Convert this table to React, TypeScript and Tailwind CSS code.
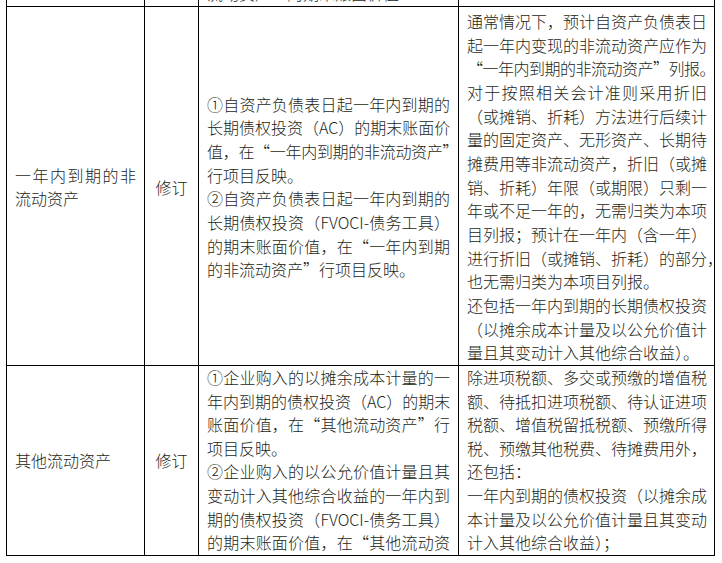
import React from 'react';

type Line = { t: string; j?: boolean; k?: string };

function Lines({ lines }: { lines: Line[] }) {
  return (
    <div>
      {lines.map((l, i) => (
        <span
          key={i}
          className={
            (l.j
              ? 'block whitespace-nowrap text-justify [text-align-last:justify]'
              : 'block whitespace-nowrap') + (l.k ? ' ' + l.k : '')
          }
        >
          {l.t}
        </span>
      ))}
    </div>
  );
}

const cell = 'border-l border-t border-black px-2 flex flex-col justify-center';

const r2c3: Line[] = [
  { t: '①自资产负债表日起一年内到期的', j: true },
  { t: '长期债权投资（AC）的期末账面价', j: true },
  { t: '值，在“一年内到期的非流动资产”', j: true, k: 'tracking-[-0.3px]' },
  { t: '行项目反映。' },
  { t: '②自资产负债表日起一年内到期的', j: true },
  { t: '长期债权投资（FVOCI-债务工具）', j: true },
  { t: '的期末账面价值，在“一年内到期', j: true },
  { t: '的非流动资产”行项目反映。' },
];

const r2c4: Line[] = [
  { t: '通常情况下，预计自资产负债表日', j: true },
  { t: '起一年内变现的非流动资产应作为', j: true },
  { t: '“一年内到期的非流动资产”列报。', j: true, k: 'tracking-[-0.5px]' },
  { t: '对于按照相关会计准则采用折旧', j: true },
  { t: '（或摊销、折耗）方法进行后续计', j: true },
  { t: '量的固定资产、无形资产、长期待', j: true },
  { t: '摊费用等非流动资产，折旧（或摊', j: true },
  { t: '销、折耗）年限（或期限）只剩一', j: true },
  { t: '年或不足一年的，无需归类为本项', j: true },
  { t: '目列报；预计在一年内（含一年）', j: true },
  { t: '进行折旧（或摊销、折耗）的部分，', j: true },
  { t: '也无需归类为本项目列报。' },
  { t: '还包括一年内到期的长期债权投资', j: true },
  { t: '（以摊余成本计量及以公允价值计', j: true },
  { t: '量且其变动计入其他综合收益）。' },
];

const r3c3: Line[] = [
  { t: '①企业购入的以摊余成本计量的一', j: true },
  { t: '年内到期的债权投资（AC）的期末', j: true },
  { t: '账面价值，在“其他流动资产”行', j: true },
  { t: '项目反映。' },
  { t: '②企业购入的以公允价值计量且其', j: true },
  { t: '变动计入其他综合收益的一年内到', j: true },
  { t: '期的债权投资（FVOCI-债务工具）', j: true },
  { t: '的期末账面价值，在“其他流动资', j: true },
];

const r3c4: Line[] = [
  { t: '除进项税额、多交或预缴的增值税', j: true },
  { t: '额、待抵扣进项税额、待认证进项', j: true },
  { t: '税额、增值税留抵税额、预缴所得', j: true },
  { t: '税、预缴其他税费、待摊费用外，', j: true },
  { t: '还包括：' },
  { t: '一年内到期的债权投资（以摊余成', j: true },
  { t: '本计量及以公允价值计量且其变动', j: true },
  { t: '计入其他综合收益）；' },
];

export default function App() {
  return (
    <div className="h-[563px] w-[722px] overflow-hidden bg-white font-['Noto_Sans_CJK_SC',sans-serif] text-[16px] font-light leading-[23.65px] text-[#231f20]">
      <div className="ml-[6px] -mt-[18.65px] grid w-[709px] grid-cols-[138px_54px_260px_256px] border-r border-b border-black">
        {/* previous row, cut off at the top */}
        <div className={cell} />
        <div className={cell} />
        <div className={cell}>
          <Lines lines={[{ t: '流动资产”的期末账面价值' }]} />
        </div>
        <div className={cell} />

        {/* 一年内到期的非流动资产 */}
        <div className={`${cell} pt-[3px]`}>
          <Lines lines={[{ t: '一年内到期的非', j: true }, { t: '流动资产' }]} />
        </div>
        <div className={`${cell} items-center pt-[3px]`}>修订</div>
        <div className={`${cell} pt-[3px] pr-[8px]`}>
          <Lines lines={r2c3} />
        </div>
        <div className={`${cell} pt-[3px] pr-[7px]`}>
          <Lines lines={r2c4} />
        </div>

        {/* 其他流动资产 */}
        <div className={cell}>
          <Lines lines={[{ t: '其他流动资产' }]} />
        </div>
        <div className={`${cell} items-center`}>修订</div>
        <div className={`${cell} pr-[8px]`}>
          <Lines lines={r3c3} />
        </div>
        <div className={`${cell} pr-[7px]`}>
          <Lines lines={r3c4} />
        </div>
      </div>
    </div>
  );
}
